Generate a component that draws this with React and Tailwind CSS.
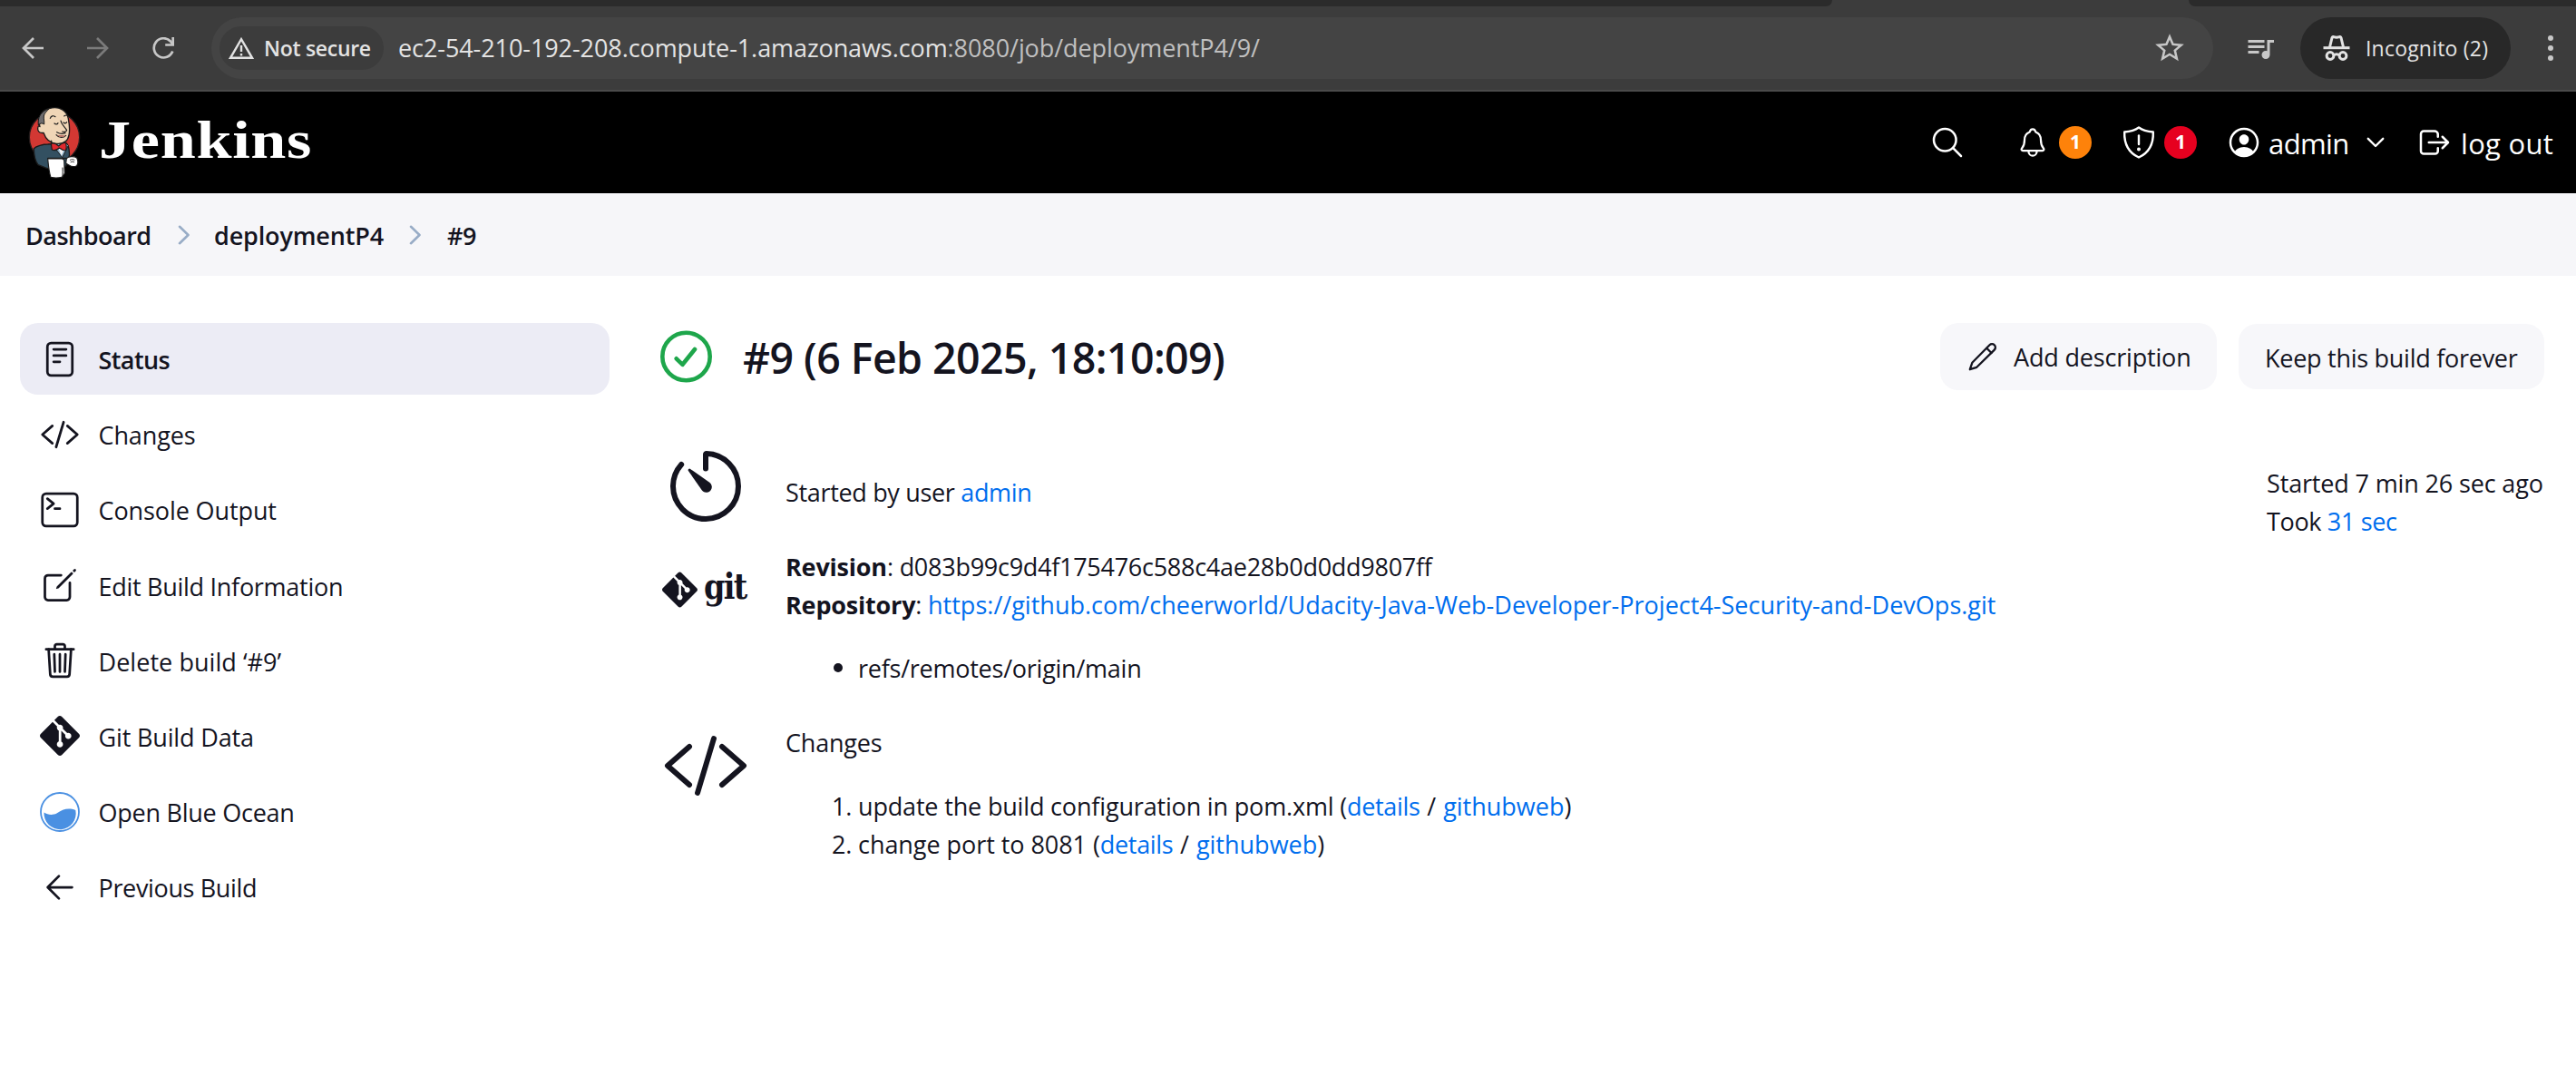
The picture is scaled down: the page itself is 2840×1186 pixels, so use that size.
import {
  IoSearchOutline,
  IoNotificationsOutline,
  IoPersonCircleOutline,
  IoLogOutOutline,
  IoReaderOutline,
  IoCodeSlashOutline,
  IoTerminalOutline,
  IoCreateOutline,
  IoTrashOutline,
  IoTimerOutline,
} from "react-icons/io5";
import { SiGit } from "react-icons/si";
import { MdQueueMusic, MdStarBorder } from "react-icons/md";

function Link({ children, className = "" }) {
  return <a className={`text-[#006eee] ${className}`}>{children}</a>;
}

function NavArrow({ className }) {
  return (
    <svg viewBox="0 0 24 24" className={className} fill="none" stroke="currentColor" strokeWidth="2.7">
      <path d="M24 12H2M13 1 2 12l11 11" />
    </svg>
  );
}

function Incognito() {
  return (
    <svg viewBox="0 0 30 28" className="h-7 w-[30px] shrink-0" fill="none" stroke="#e3e3e3" strokeWidth="3">
      <path d="M0.5 13.7h29" strokeWidth="3" />
      <path d="M7.5 13 10 2.6c.3-1 1.200-1.300 2-.9 2 .8 4 .8 6 0 .8-.4 1.700-.1 2 .9L22.500 13" strokeLinejoin="round" />
      <circle cx="8" cy="22.500" r="3.900" />
      <circle cx="22" cy="22.500" r="3.900" />
      <path d="M11.500 22c2-1.500 5-1.500 7 0" />
    </svg>
  );
}

function BrowserBar() {
  return (
    <div>
      <div className="flex h-[7px] bg-[#3c3c3c]">
        <div className="w-[2020px] rounded-br-[14px] bg-[#2b2b2b]" />
        <div className="w-[393px]" />
        <div className="flex-1 rounded-bl-[14px] bg-[#2b2b2b]" />
      </div>
      <div className="flex h-[94px] items-start border-b-2 border-[#4a4a4a] bg-[#3c3c3c] pt-3">
        <div className="flex h-[68px] w-[233px] items-center pl-6 text-[#c7c7c7]">
          <NavArrow className="h-6 w-6" />
          <NavArrow className="ml-12 h-6 w-6 rotate-180 text-[#7b7b7b]" />
          <svg viewBox="0 0 24 24" className="ml-12 h-6 w-6" fill="none" stroke="currentColor" strokeWidth="2.7">
            <path d="M22.300 15.500A10.600 10.600 0 1 1 20 4.500L22.500 8" />
            <path d="M22.700 0v8.500h-8.500" />
          </svg>
        </div>
        <div className="flex h-[68px] w-[2207px] items-center rounded-full bg-[#444444] pl-[9px]">
          <div className="flex h-12 w-[181px] items-center rounded-full bg-[#3c3c3c] pl-[10px] text-[#e3e3e3]">
            <svg viewBox="0 0 28 24" className="h-6 w-7" fill="none" stroke="currentColor" strokeWidth="2.400">
              <path d="M2 22.800 14 2.200l12 20.600z" />
              <path d="M14 9v7M14 18v2.500" />
            </svg>
            <span className="ml-[11px] text-[23px] font-semibold tracking-[-0.3px] whitespace-nowrap">Not secure</span>
          </div>
          <div className="ml-4 flex-1 text-[27px] leading-[42px] tracking-[-0.08px] whitespace-nowrap text-[#e3e3e3]">
            ec2-54-210-192-208.compute-1.amazonaws.com
            <span className="text-[#c0c0c0]">:8080/job/deploymentP4/9/</span>
          </div>
          <MdStarBorder className="mr-[29px] h-[38px] w-[38px] text-[#c7c7c7]" />
        </div>
        <div className="flex h-[68px] w-24 items-center pl-[34px]">
          <MdQueueMusic className="h-9 w-9 text-[#c7c7c7]" />
        </div>
        <div className="flex h-[68px] w-[232px] items-center rounded-full bg-[#282828] pl-[25px] text-[#e3e3e3]">
          <Incognito />
          <span className="ml-[17px] text-[23px] tracking-[0.2px] whitespace-nowrap">Incognito (2)</span>
        </div>
        <div className="flex h-[68px] flex-col justify-center gap-[5px] pl-[41px]">
          <div className="h-[6px] w-[6px] rounded-full bg-[#c7c7c7]" />
          <div className="h-[6px] w-[6px] rounded-full bg-[#c7c7c7]" />
          <div className="h-[6px] w-[6px] rounded-full bg-[#c7c7c7]" />
        </div>
      </div>
    </div>
  );
}

function Butler() {
  return (
    <svg viewBox="33 20 174 240" className="h-20 w-[58px] shrink-0" strokeLinejoin="round" strokeLinecap="round">
      <circle cx="120" cy="123" r="83" fill="#d33833" stroke="#241c1c" strokeWidth="4" />
      <path d="M52 160c8-8 30-14 46-14l60-4c10 6 14 34 10 50l-10 26-62 8-30-12c-12-16-14-38-14-54z" fill="#335061" stroke="#1b1b1b" strokeWidth="4" />
      <path d="M112 146l34 44 20-40-10-10-36-2z" fill="#8fb4cc" stroke="#1b1b1b" strokeWidth="3" />
      <path d="M134 160l9 24 10-24z" fill="#f4f4f4" />
      <path d="M72 88c-8-30 4-54 30-60 36-10 60 8 64 34 4 20 6 34 2 54-4 22-22 30-42 28-24-2-36-18-42-36-12 2-20-4-19-15 1-8 4-9 7-5z" fill="#f0d6b7" stroke="#1b1b1b" strokeWidth="4" />
      <path d="M67 82c-4-24 8-46 36-54-6 7-17 15-18 25-1 9 2 15 1 27-5-5-14-4-19 2z" fill="#6d6b6d" stroke="#1b1b1b" strokeWidth="3" />
      <path d="M106 60c3-8 10-10 17-5M152 53c5-4 10-4 13 0M120 77c4 4 9 4 12-1M150 74c4 4 8 3 11-1M141 68c2 14 16 22 20 32-2 6-10 6-15 4M128 106c10 6 20 6 28 3M126 115c10 12 24 10 32 2" fill="none" stroke="#1b1b1b" strokeWidth="3.500" />
      <path d="M128 115c10 9 20 8 29 3-8-4-20-1-29-3z" fill="#b8766a" />
      <path d="M110 144c8-4 18 2 24 8 8-8 16-12 24-10 2 8 2 16 0 24-8 2-14-2-22-8-6 6-16 10-24 6-2-10-4-20-2-30z" fill="#e02a2f" stroke="#1b1b1b" strokeWidth="3.500" />
      <path d="M98 192h60M146 192v26" fill="none" stroke="#1b1b1b" strokeWidth="4" />
      <path d="M160 193c6-8 26-8 34-2 4 8 4 20 0 26-8 4-20 2-26-2l-10-6z" fill="#fff" stroke="#1b1b1b" strokeWidth="3.500" />
      <path d="M172 198c6-3 10-2 14 0M174 205c5-2 8-2 11 0" fill="none" stroke="#1b1b1b" strokeWidth="2.500" />
      <path d="M98 194h48l6 4 2 44-8 12c-12 4-26 4-38 1-6-16-8-40-10-61z" fill="#fff" stroke="#1b1b1b" strokeWidth="3.500" />
      <path d="M147 224c0 10 1 18 0 28" fill="none" stroke="#1b1b1b" strokeWidth="3" />
    </svg>
  );
}

function Header() {
  return (
    <div className="flex h-28 items-center bg-black text-white">
      <div className="flex flex-1 items-center pl-[31px]">
        <Butler />
        <span className="ml-[20px] -mt-[6px] origin-left scale-x-[1.17] font-['Liberation_Serif',serif] text-[60px] leading-[70px] font-bold tracking-[0.6px]">
          Jenkins
        </span>
      </div>
      <IoSearchOutline className="h-10 w-10" />
      <IoNotificationsOutline className="ml-[56px] h-9 w-9" />
      <span className="ml-[11px] flex h-9 w-9 items-center justify-center rounded-full bg-[#fe820a] text-[21px] font-bold">1</span>
      <svg viewBox="0 0 36 36" className="ml-[34px] h-9 w-9" fill="none" stroke="currentColor" strokeWidth="2.400" strokeLinecap="round" strokeLinejoin="round">
        <path d="M18 1.500c4 3 10 4.500 15.800 5C34.300 20 30 29 18 34.500 6 29 1.700 20 2.200 6.500 8 6 14 4.500 18 1.500z" />
        <path d="M18 10.500v9.500" />
        <circle cx="18" cy="25.500" r="0.800" fill="currentColor" />
      </svg>
      <span className="ml-[10px] flex h-9 w-9 items-center justify-center rounded-full bg-[#e6001f] text-[21px] font-bold">1</span>
      <IoPersonCircleOutline className="ml-[32px] h-10 w-10" />
      <span className="mt-[2px] ml-[7px] w-[90px] text-[31px] leading-[48px] tracking-[-0.6px] whitespace-nowrap">admin</span>
      <svg viewBox="0 0 20 12" className="ml-[18px] h-3 w-5" fill="none" stroke="currentColor" strokeWidth="2.400" strokeLinecap="round" strokeLinejoin="round">
        <path d="M1.800 1.800 10 10l8.200-8.200" />
      </svg>
      <IoLogOutOutline className="ml-[35px] h-10 w-10" />
      <span className="mt-[2px] ml-[9px] w-[127px] text-[31px] leading-[48px] tracking-[0.3px] whitespace-nowrap">log out</span>
    </div>
  );
}

function Crumb() {
  return (
    <svg viewBox="0 0 14 22" className="h-[22px] w-[14px]" fill="none" stroke="#98acc6" strokeWidth="2.600" strokeLinecap="round" strokeLinejoin="round">
      <path d="M2 1.800 11.500 11 2 20.200" />
    </svg>
  );
}

function Breadcrumbs() {
  return (
    <div className="flex h-[91px] items-center bg-[#f6f6f9] pl-[28px] text-[27px] font-semibold">
      <span className="mt-[3px] w-[168px] tracking-[-0.5px]">Dashboard</span>
      <Crumb />
      <span className="mt-[3px] ml-[26px] w-[215px] tracking-[-0.15px]">deploymentP4</span>
      <Crumb />
      <span className="mt-[3px] ml-[28px] tracking-[-0.5px]">#9</span>
    </div>
  );
}

function BlueOcean() {
  return (
    <svg viewBox="0 0 44 44" className="h-11 w-11">
      <circle cx="22" cy="22" r="21" fill="#fff" stroke="#4a90e2" strokeWidth="1.800" />
      <path d="M4.500 22.500c4 2.500 9 3.500 14 1 6.500-4.500 13-6.500 20.800-3.500a17.600 17.600 0 1 1-34.800 2.500z" fill="#4a90e2" />
    </svg>
  );
}

function ArrowBack() {
  return (
    <svg viewBox="0 0 512 512" className="h-11 w-11" fill="none" stroke="currentColor" strokeWidth="32" strokeLinecap="round" strokeLinejoin="round">
      <path d="M244 400 100 256l144-144M110 256h302" />
    </svg>
  );
}

function Pencil() {
  return (
    <svg viewBox="0 0 36 36" className="h-9 w-9" fill="none" stroke="currentColor" strokeWidth="2.300" strokeLinecap="round" strokeLinejoin="round">
      <path d="M3.800 32.200 6.300 24.800 25.500 5.300a3.700 3.700 0 0 1 5.300 5.300L11.300 29.800z" />
      <path d="m22.300 8.800 5.200 5.200" />
    </svg>
  );
}

const tasks = [
  { label: "Status", icon: <IoReaderOutline className="h-11 w-11" />, track: "tracking-[-0.6px] font-semibold", bg: "bg-[#ececf5]" },
  { label: "Changes", icon: <IoCodeSlashOutline className="h-11 w-11" />, track: "tracking-[-0.1px]" },
  { label: "Console Output", icon: <IoTerminalOutline className="h-11 w-11" />, track: "tracking-[-0.1px]" },
  { label: "Edit Build Information", icon: <IoCreateOutline className="h-11 w-11" />, track: "tracking-[-0.28px]" },
  { label: "Delete build ‘#9’", icon: <IoTrashOutline className="h-11 w-11" />, track: "tracking-[0.05px]" },
  { label: "Git Build Data", icon: <SiGit className="h-11 w-11" />, track: "tracking-[-0.15px]" },
  { label: "Open Blue Ocean", icon: <BlueOcean />, track: "tracking-[-0.25px]" },
  { label: "Previous Build", icon: <ArrowBack />, track: "tracking-[-0.35px]" },
];

function Sidebar() {
  return (
    <nav className="flex w-[650px] flex-col gap-[4.2px]">
      {tasks.map((t) => (
        <div key={t.label} className={`flex h-[79px] items-center rounded-[20px] pl-[22px] ${t.bg ?? ""}`}>
          {t.icon}
          <span className={`mt-[3px] ml-[20.500px] text-[27px] leading-[42px] whitespace-nowrap ${t.track}`}>{t.label}</span>
        </div>
      ))}
    </nav>
  );
}

function TitleRow() {
  return (
    <div className="flex h-[74px] items-center">
      <svg viewBox="0 0 58 58" className="h-[58px] w-[58px]" fill="none" stroke="#1ea64b" strokeWidth="4.600" strokeLinecap="round" strokeLinejoin="round">
        <circle cx="28.500" cy="29" r="26.200" />
        <path d="m17.700 31.300 6.800 6.500L38 21" />
      </svg>
      <h1 className="mt-[2px] ml-[33px] flex-1 text-[46.500px] leading-[60px] font-semibold tracking-[-0.57px] whitespace-nowrap">
        #9 (6 Feb 2025, 18:10:09)
      </h1>
      <button className="flex h-[74px] w-[305px] items-center rounded-[20px] bg-[#f7f7fa] pl-[29px]">
        <Pencil />
        <span className="mt-[2px] ml-[16px] text-[27px] leading-[42px] tracking-[-0.18px] whitespace-nowrap">Add description</span>
      </button>
      <button className="ml-6 flex h-[72px] w-[337px] items-center rounded-[20px] bg-[#f7f7fa] pl-[29px]">
        <span className="mt-[3px] text-[27px] leading-[42px] tracking-[-0.27px] whitespace-nowrap">Keep this build forever</span>
      </button>
    </div>
  );
}

function ChangeLinks() {
  return (
    <>
      (<Link className="tracking-[-0.3px]">details</Link>
      <span className="tracking-[0.5px]"> / </span>
      <Link className="tracking-[0px]">githubweb</Link>)
    </>
  );
}

function Details() {
  return (
    <div className="flex flex-1 flex-col pl-0.5 text-[27px] leading-[42px] tracking-[-0.2px] whitespace-nowrap">
      <div className="flex h-24 gap-10">
        <IoTimerOutline className="h-24 w-24" />
        <div className="pt-[34px] tracking-[-0.33px]">
          Started by user <Link>admin</Link>
        </div>
      </div>
      <div className="mt-[18px] flex gap-10">
        <div className="flex h-24 w-24 items-center">
          <SiGit className="h-10 w-10" />
          <span className="ml-[7px] -mt-[9px] origin-left scale-x-[0.93] font-['DejaVu_Serif_Condensed','DejaVu_Serif',serif] text-[40px] leading-[48px] font-bold tracking-[-1.800px]">
            git
          </span>
        </div>
        <div className="pt-[1.500px]">
          <div>
            <b>Revision</b>: <span className="tracking-[-0.27px]">d083b99c9d4f175476c588c4ae28b0d0dd9807ff</span>
          </div>
          <div>
            <b>Repository</b>:{" "}
            <Link className="tracking-[0.01px]">
              https://github.com/cheerworld/Udacity-Java-Web-Developer-Project4-Security-and-DevOps.git
            </Link>
          </div>
          <div className="mt-7 flex items-center pl-[53px]">
            <span className="-mt-[2px] h-[10px] w-[10px] rounded-full bg-[#14141f]" />
            <span className="ml-[17px] tracking-[-0.25px]">refs/remotes/origin/main</span>
          </div>
        </div>
      </div>
      <div className="mt-[38.500px] flex gap-10">
        <IoCodeSlashOutline className="h-24 w-24" />
        <div className="pt-[1.500px]">
          <div>Changes</div>
          <div className="mt-7 flex pl-[51px]">
            <span className="w-[29px]">1.</span>
            <span>
              <span className="tracking-[-0.17px]">update the build configuration in pom.xml </span>
              <ChangeLinks />
            </span>
          </div>
          <div className="flex pl-[51px]">
            <span className="w-[29px]">2.</span>
            <span>
              <span className="tracking-[-0.05px]">change port to 8081 </span>
              <ChangeLinks />
            </span>
          </div>
        </div>
      </div>
    </div>
  );
}

export default function App() {
  return (
    <div className="h-[1186px] w-[2840px] overflow-hidden bg-white font-['Open_Sans','Noto_Sans',sans-serif] text-[#14141f]">
      <BrowserBar />
      <Header />
      <Breadcrumbs />
      <div className="flex pt-[52px] pr-[35px] pl-[22px]">
        <Sidebar />
        <main className="ml-14 flex-1">
          <TitleRow />
          <div className="mt-[58px] flex">
            <Details />
            <aside className="w-[306px] pt-[23.500px] text-[27px] leading-[42px] tracking-[-0.15px] whitespace-nowrap">
              <div>Started 7 min 26 sec ago</div>
              <div className="tracking-[-0.35px]">
                Took <Link>31 sec</Link>
              </div>
            </aside>
          </div>
        </main>
      </div>
    </div>
  );
}
